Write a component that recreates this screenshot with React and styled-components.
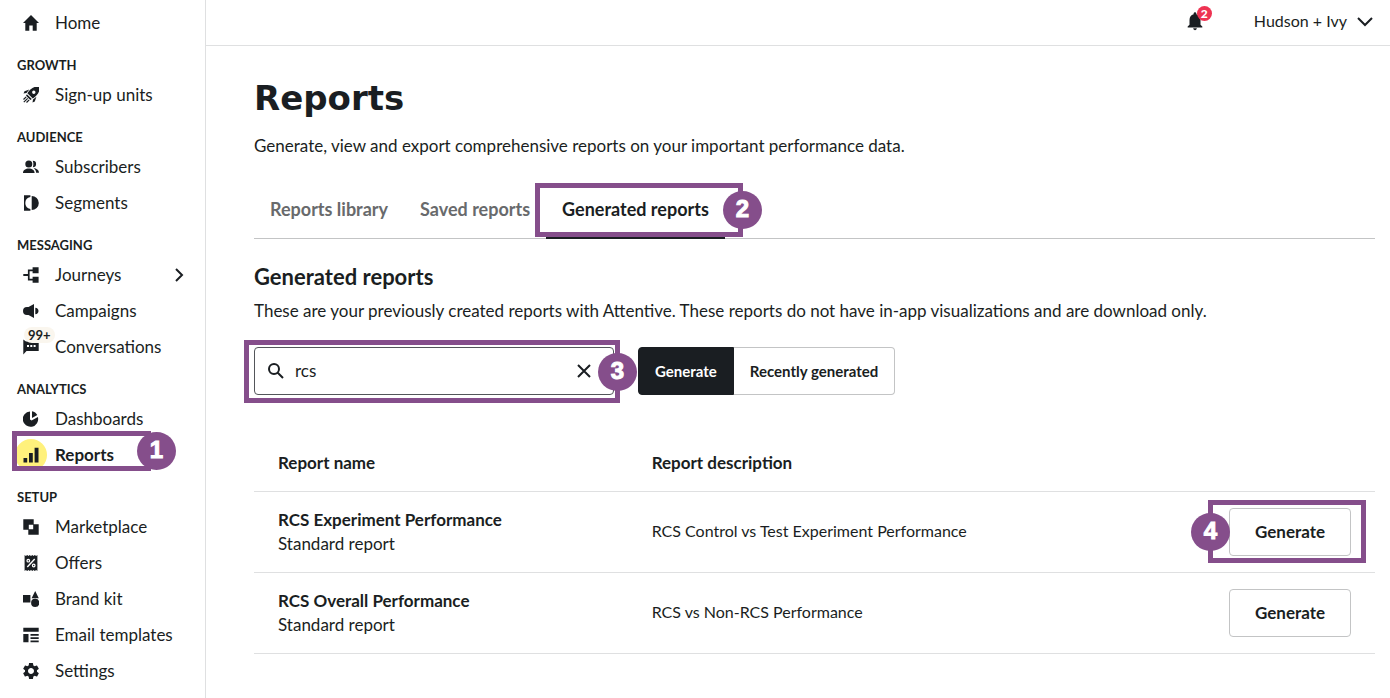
import React, { useState } from "react";
import styled, { createGlobalStyle, css } from "styled-components";
import { MdNotifications, MdSettings } from "react-icons/md";

const ink = "#1a1e22";
const purple = "#854e8b";

const GlobalStyle = createGlobalStyle`
  *, *::before, *::after { box-sizing: border-box; }
  body {
    margin: 0;
    background: #fff;
    color: ${ink};
    font: 400 17px/24px Lato, "Open Sans", sans-serif;
  }
  button, input { font: inherit; color: inherit; }
`;

const Page = styled.div`
  display: flex;
  min-height: 100vh;
`;

const Sidebar = styled.nav`
  flex: 0 0 206px;
  padding-top: 5px;
  border-right: 1px solid #dfe0e1;
`;

const NavHeading = styled.h2`
  margin: 0;
  padding: 12px 17px 0;
  font-size: 13px;
  line-height: 24px;
  font-weight: 700;
`;

const NavList = styled.ul`
  margin: 0;
  padding: 0;
  list-style: none;
`;

const NavItem = styled.li`
  position: relative;
`;

const NavLink = styled.a`
  display: flex;
  align-items: center;
  gap: 8px;
  height: 36px;
  padding: 0 18px 0 15px;
  color: inherit;
  text-decoration: none;
  font-weight: ${(p) => (p.$active ? 700 : 400)};
`;

const NavIcon = styled.span`
  position: relative;
  display: flex;
  align-items: center;
  justify-content: center;
  width: 32px;
  height: 32px;
  border-radius: 50%;
  background: ${(p) => (p.$active ? "#fff17c" : "transparent")};
`;

const NavLabel = styled.span`
  flex: 1;
`;

const CountPill = styled.span`
  position: absolute;
  top: -4px;
  left: 9px;
  padding: 0 4px;
  border-radius: 8px;
  background: #faf6ee;
  font-size: 13px;
  line-height: 16px;
  font-weight: 700;
`;

const Column = styled.div`
  flex: 1;
  min-width: 0;
`;

const TopBar = styled.header`
  display: flex;
  align-items: center;
  justify-content: flex-end;
  gap: 48px;
  height: 46px;
  padding: 0 17px 4px 0;
  border-bottom: 1px solid #dfe0e1;
  font-size: 16px;
`;

const PlainButton = styled.button`
  position: relative;
  display: flex;
  align-items: center;
  gap: 10px;
  padding: 0;
  border: 0;
  background: none;
  cursor: pointer;
`;

const AlertCount = styled.span`
  position: absolute;
  top: -4px;
  right: -6px;
  width: 15px;
  height: 15px;
  border-radius: 50%;
  background: #ee3352;
  color: #fff;
  font-size: 12px;
  line-height: 15px;
  font-weight: 900;
  text-align: center;
`;

const Main = styled.main`
  padding: 30px 15px 44px 48px;
`;

const Title = styled.h1`
  margin: 0;
  font: 700 34px/44px "DejaVu Sans", sans-serif;
`;

const Lead = styled.p`
  margin: 14px 0 23px;
`;

const Tabs = styled.div`
  display: flex;
  height: 58px;
  border-bottom: 1px solid #c3c4c5;
`;

const Tab = styled.button`
  position: relative;
  padding: 0 16px 2px;
  border: 0;
  background: none;
  color: ${(p) => (p.$active ? ink : "#686a6c")};
  font-size: 18px;
  font-weight: 700;
  cursor: pointer;
  ${(p) =>
    p.$active &&
    css`
      margin-bottom: -1px;
      padding-bottom: 0;
      border-bottom: 2px solid ${ink};
    `}
`;

const SectionTitle = styled.h2`
  margin: 24px 0 8px;
  font-size: 22px;
  line-height: 28px;
  font-weight: 700;
`;

const SectionText = styled.p`
  margin: 0 0 24px;
`;

const Filters = styled.div`
  display: flex;
  gap: 24px;
`;

const SearchBox = styled.div`
  position: relative;
  display: flex;
  align-items: center;
  width: 360px;
  height: 48px;
  padding: 0 21px 0 12px;
  gap: 10px;
  border: 1px solid #53565a;
  border-radius: 4px;
`;

const SearchInput = styled.input`
  flex: 1;
  min-width: 0;
  padding: 0;
  border: 0;
  outline: 0;
  background: none;
`;

const Segmented = styled.div`
  display: flex;
`;

const Segment = styled.button`
  padding: 0 16px;
  border: 1px solid ${(p) => (p.$active ? ink : "#c3c4c5")};
  border-left-width: ${(p) => (p.$active ? "1px" : "0")};
  border-radius: ${(p) => (p.$active ? "4px 0 0 4px" : "0 4px 4px 0")};
  background: ${(p) => (p.$active ? ink : "#fff")};
  color: ${(p) => (p.$active ? "#fff" : ink)};
  font-size: 15px;
  font-weight: 700;
  cursor: pointer;
`;

const Table = styled.table`
  width: 100%;
  margin-top: 40px;
  border-collapse: separate;
  border-spacing: 0;
  table-layout: fixed;
`;

const Th = styled.th`
  height: 57px;
  padding: 0 24px;
  border-bottom: 1px solid #dfe0e1;
  font-weight: 700;
  text-align: left;
`;

const Td = styled.td`
  height: 81px;
  padding: 0 24px;
  border-bottom: 1px solid #dfe0e1;
  strong { display: block; }
`;

const DescriptionCell = styled(Td)`
  padding-bottom: 2px;
  font-size: 16px;
`;

const Action = styled.div`
  position: relative;
  width: 122px;
  margin-left: auto;
`;

const OutlineButton = styled.button`
  display: block;
  width: 100%;
  height: 48px;
  padding: 0;
  border: 1px solid #c3c4c5;
  border-radius: 4px;
  background: #fff;
  font-weight: 700;
  cursor: pointer;
`;

const Frame = styled.span`
  position: absolute;
  inset: ${(p) => p.$inset};
  border: 5px solid ${purple};
  pointer-events: none;
`;

const Step = styled.span`
  position: absolute;
  top: 50%;
  ${(p) => p.$side}: ${(p) => p.$offset};
  width: 39px;
  height: 38px;
  margin-top: -19px;
  border-radius: 50%;
  background: ${purple};
  color: #fff;
  font: 700 24px/36px "Liberation Sans", sans-serif;
  text-align: center;
  -webkit-text-stroke: 1px #fff;
`;

function Callout({ step, inset, side = "right", offset = "-24px" }) {
  return (
    <Frame $inset={inset}>
      <Step $side={side} $offset={offset}>{step}</Step>
    </Frame>
  );
}

const shapes = {
  home: <path d="M8 0 0 8h2.300v7.700h4v-5.200h3.400v5.200h4V8H16z" />,
  rocket: (
    <>
      <path
        fillRule="evenodd"
        d="M16 0v4.500c-1 2.800-3.300 5-6.200 7.100L4.400 6.200C6.500 3.300 8.700 1 11.500.1ZM10.800 3.600a1.700 1.700 0 1 0 0 3.400 1.700 1.700 0 0 0 0-3.400ZM3.900 7.200l4.900 4.900-1.500.9L3 8.700Z"
      />
      <path d="M6.300 2.600 1.500 4.200.5 6.500l3-.5ZM13.400 9.700l-1.600 4.800-2.300 1 .5-3Z" />
      <path d="m3.200 9.800-2.700 2.700M4.700 11.300.8 15.200M6.200 12.800l-2.700 2.700" stroke="currentColor" strokeWidth="1.200" />
    </>
  ),
  people: (
    <>
      <circle cx="5.800" cy="5" r="3.500" />
      <path d="M0 14c0-2.900 2.600-4.500 5.800-4.500s5.800 1.600 5.800 4.500ZM9.800 1.700a3.300 3.300 0 1 1 0 6.600c.8-1.900.8-4.500 0-6.600ZM10.700 9.200c2.500 0 5.300 1.500 5.300 4.500h-2.900c0-1.900-.8-3.400-2.400-4.500Z" />
    </>
  ),
  segments: (
    <path d="M1 .3h6.400v1.600a6.200 6.200 0 0 0 0 12.200v1.600H1ZM8.700.9a7.100 7.100 0 0 1 0 14.200Z" />
  ),
  journeys: (
    <path d="M9.600.3h6v6h-6V4.200H6.600v7.600h3V9.700h6v6h-6v-2.200H4.900V8.900H.3V7.100h4.600V2.500h4.700Z" />
  ),
  campaigns: (
    <path d="M11 1v14L5.500 12H4a4 4 0 0 1-4-4 4 4 0 0 1 4-4h1.500ZM12.300 4.700c2 .2 3.200 1.500 3.200 3.300s-1.200 3.100-3.200 3.300Z" />
  ),
  conversations: (
    <path fillRule="evenodd" d="M.3.500 3 2.500h12.700V12H3.500l-3.200 3.500ZM4 6v2h2V6Zm3.300 0v2h2V6Zm3.300 0v2h2V6Z" />
  ),
  dashboards: (
    <path d="M7 .4v8.200l1.600 1 6.300-3.500A7.700 7.700 0 1 1 7 .4ZM9 .2c2.500.3 4.200 1.800 5.300 3.900L9 7Z" />
  ),
  reports: <path d="M.5 11h3.700v4.500H.5ZM6 6h3.800v9.500H6ZM11.600.8h3.900v14.700h-3.900Z" />,
  marketplace: (
    <path fillRule="evenodd" d="M.3.300h10.400v5h5v10.400H5.300v-5h-5ZM5.800 5.800v4.400h4.400V5.800Z" />
  ),
  offers: (
    <>
      <path d="M1.600 0 2.900 1 4.200 0l1.300 1L6.700 0 8 1l1.300-1 1.200 1 1.300-1 1.300 1L14.400 0v16l-1.300-1-1.300 1-1.300-1-1.200 1L8 15l-1.300 1-1.200-1-1.300 1-1.300-1-1.300 1Z" />
      <path d="m4.300 12 7.400-8" stroke="#fff" strokeWidth="1.400" />
      <circle cx="5.300" cy="5.700" r="1.300" fill="none" stroke="#fff" strokeWidth="1.200" />
      <circle cx="10.700" cy="10.500" r="1.300" fill="none" stroke="#fff" strokeWidth="1.200" />
    </>
  ),
  brand: (
    <path d="M0 4h7.400v7.400H0ZM12.200 0l3.600 7.200H8.600ZM12.200 7.800a4.100 4.100 0 1 1 0 8.200 4.100 4.100 0 0 1 0-8.200Z" />
  ),
  templates: (
    <path d="M.3.800h15.400v4H.3ZM.3 7h5.200v8.200H.3ZM7.500 7h8.200v1.700H7.500Zm0 3.200h8.200v1.700H7.500Zm0 3.300h8.200v1.700H7.500Z" />
  ),
};

function Shape({ name }) {
  return (
    <svg width="16" height="16" viewBox="0 0 16 16" fill="currentColor" aria-hidden="true">
      {shapes[name]}
    </svg>
  );
}

const StrokeIcon = ({ d, width = 16, height = 16, weight = 2 }) => (
  <svg width={width} height={height} viewBox={`0 0 ${width} ${height}`} fill="none" stroke={ink} strokeWidth={weight} aria-hidden="true">
    <path d={d} />
  </svg>
);

const groups = [
  { items: [{ label: "Home", icon: "home" }] },
  { title: "GROWTH", items: [{ label: "Sign-up units", icon: "rocket" }] },
  {
    title: "AUDIENCE",
    items: [
      { label: "Subscribers", icon: "people" },
      { label: "Segments", icon: "segments" },
    ],
  },
  {
    title: "MESSAGING",
    items: [
      { label: "Journeys", icon: "journeys", expandable: true },
      { label: "Campaigns", icon: "campaigns" },
      { label: "Conversations", icon: "conversations", count: "99+" },
    ],
  },
  {
    title: "ANALYTICS",
    items: [
      { label: "Dashboards", icon: "dashboards" },
      { label: "Reports", icon: "reports", active: true },
    ],
  },
  {
    title: "SETUP",
    items: [
      { label: "Marketplace", icon: "marketplace" },
      { label: "Offers", icon: "offers" },
      { label: "Brand kit", icon: "brand" },
      { label: "Email templates", icon: "templates" },
      { label: "Settings", glyph: <MdSettings size={20} /> },
    ],
  },
];

const reports = [
  { name: "RCS Experiment Performance", text: "RCS Control vs Test Experiment Performance", marked: true },
  { name: "RCS Overall Performance", text: "RCS vs Non-RCS Performance" },
];

export default function App() {
  const [query, setQuery] = useState("rcs");
  return (
    <Page>
      <GlobalStyle />
      <Sidebar>
        {groups.map((group, i) => (
          <React.Fragment key={i}>
            {group.title && <NavHeading>{group.title}</NavHeading>}
            <NavList>
              {group.items.map((item) => (
                <NavItem key={item.label}>
                  <NavLink href="#" $active={item.active}>
                    <NavIcon $active={item.active}>
                      {item.glyph || <Shape name={item.icon} />}
                      {item.count && <CountPill>{item.count}</CountPill>}
                    </NavIcon>
                    <NavLabel>{item.label}</NavLabel>
                    {item.expandable && <StrokeIcon d="m5 2 6 6-6 6" />}
                  </NavLink>
                  {item.active && <Callout step="1" inset="-6px 54px 2px 12px" offset="-30px" />}
                </NavItem>
              ))}
            </NavList>
          </React.Fragment>
        ))}
      </Sidebar>
      <Column>
        <TopBar>
          <PlainButton aria-label="Notifications">
            <MdNotifications size={22} />
            <AlertCount>2</AlertCount>
          </PlainButton>
          <PlainButton>
            Hudson + Ivy
            <StrokeIcon d="m1 5 7 7 7-7" />
          </PlainButton>
        </TopBar>
        <Main>
          <Title>Reports</Title>
          <Lead>Generate, view and export comprehensive reports on your important performance data.</Lead>
          <Tabs role="tablist">
            <Tab role="tab">Reports library</Tab>
            <Tab role="tab">Saved reports</Tab>
            <Tab role="tab" aria-selected="true" $active>
              Generated reports
              <Callout step="2" inset="2px -18px 0 -11px" />
            </Tab>
          </Tabs>
          <SectionTitle>Generated reports</SectionTitle>
          <SectionText>
            These are your previously created reports with Attentive. These reports do not have in-app visualizations and are download only.
          </SectionText>
          <Filters>
            <SearchBox>
              <StrokeIcon width={18} height={18} d="M7 2a5 5 0 1 0 0 10A5 5 0 0 0 7 2ZM11 11l5 5" />
              <SearchInput aria-label="Search reports" value={query} onChange={(e) => setQuery(e.target.value)} />
              <PlainButton aria-label="Clear search" onClick={() => setQuery("")}>
                <StrokeIcon d="m2 2 12 12M14 2 2 14" />
              </PlainButton>
              <Callout step="3" inset="-8px -7px -9px -11px" offset="-22px" />
            </SearchBox>
            <Segmented>
              <Segment $active>Generate</Segment>
              <Segment>Recently generated</Segment>
            </Segmented>
          </Filters>
          <Table>
            <thead>
              <tr>
                <Th scope="col">Report name</Th>
                <Th scope="col">Report description</Th>
                <Th as="td" />
              </tr>
            </thead>
            <tbody>
              {reports.map((report) => (
                <tr key={report.name}>
                  <Td>
                    <strong>{report.name}</strong>
                    Standard report
                  </Td>
                  <DescriptionCell>{report.text}</DescriptionCell>
                  <Td>
                    <Action>
                      <OutlineButton>Generate</OutlineButton>
                      {report.marked && <Callout step="4" side="left" offset="-22px" inset="-8px -15px -7px -21px" />}
                    </Action>
                  </Td>
                </tr>
              ))}
            </tbody>
          </Table>
        </Main>
      </Column>
    </Page>
  );
}
